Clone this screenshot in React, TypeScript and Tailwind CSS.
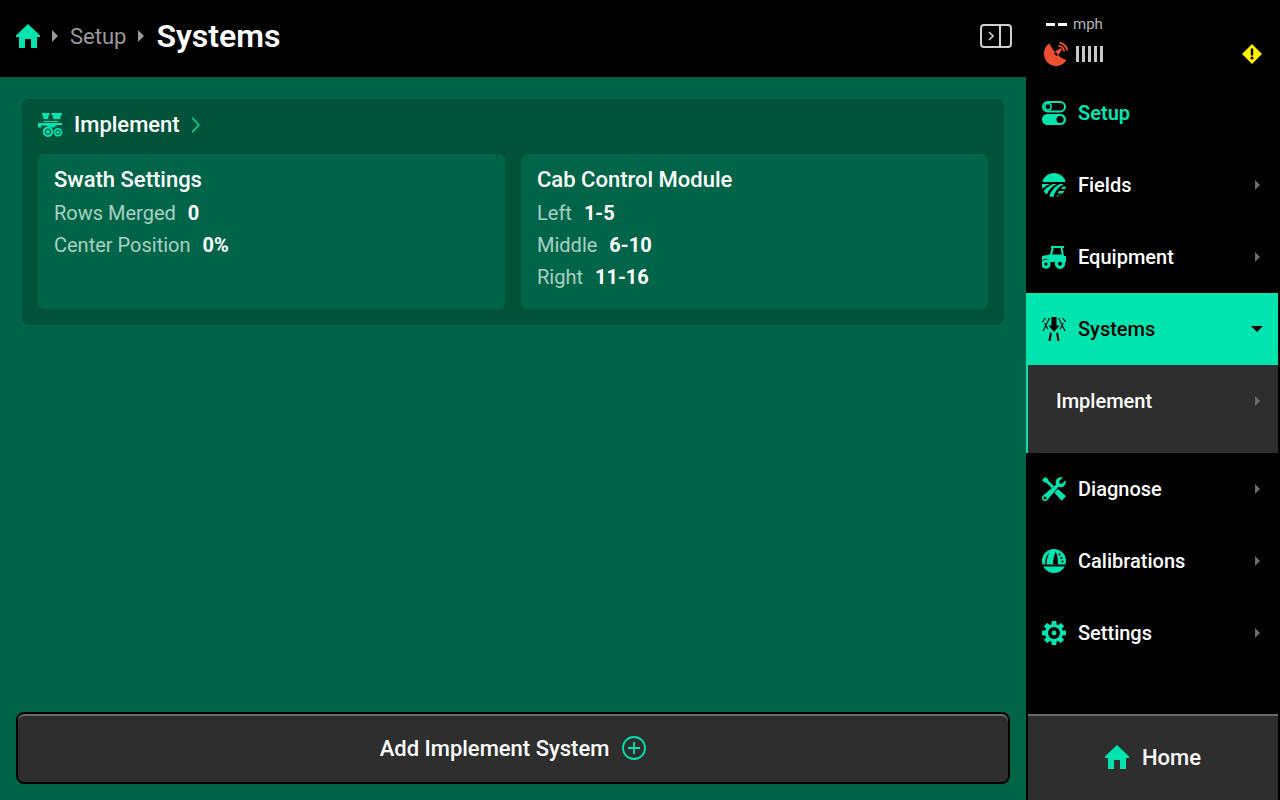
const FONT = "font-['Roboto',sans-serif]";

function HomeIcon({ className }: { className?: string }) {
  return (
    <svg viewBox="0 0 24 24" className={className} fill="currentColor">
      <path d="M12 0 L24 11.5 V13 H21 V24 H15 V15 H9 V24 H3 V13 H0 V11.5 Z" />
    </svg>
  );
}

function Caret({ className }: { className?: string }) {
  return (
    <svg viewBox="0 0 6 10" preserveAspectRatio="none" className={className} fill="currentColor">
      <path d="M0 0 L6 5 L0 10 Z" />
    </svg>
  );
}

function SetupIcon() {
  return (
    <svg viewBox="0 0 24 24" className="w-6 h-6" fill="none" stroke="currentColor">
      <rect x="1" y="1" width="22" height="9.5" rx="4.75" strokeWidth="2" />
      <circle cx="6" cy="5.75" r="3.2" strokeWidth="1.5" />
      <rect x="0" y="13" width="24" height="11" rx="5.5" fill="currentColor" stroke="none" />
      <circle cx="18" cy="18.5" r="3.6" fill="#000" stroke="none" />
    </svg>
  );
}

function FieldsIcon() {
  return (
    <svg viewBox="0 0 24 24" className="w-6 h-6" fill="currentColor">
      <defs>
        <clipPath id="fields-clip">
          <circle cx="12" cy="12" r="12" />
        </clipPath>
      </defs>
      <g clipPath="url(#fields-clip)">
        <rect x="0" y="0" width="24" height="9" />
        <path d="M0 11 H8 C5 12 2 14 0 16.5 Z" />
        <path d="M11 11 H15 C10 13 6.5 17 4.5 22 L1.5 18.5 C3.5 15.5 7 12.5 11 11 Z" />
        <path d="M18 11 H22 C16.5 13.5 13 18 11.5 24 H7 C8.5 18.5 12.5 13.5 18 11 Z" />
        <path d="M24 13.5 V16 H19 L21 13.5 Z M24 18 V20.5 H15.5 L17 18 Z M24 22.5 V24 H14.5 L15 22.5 Z" />
      </g>
    </svg>
  );
}

function EquipmentIcon() {
  return (
    <svg viewBox="0 0 24 24" className="w-6 h-6" fill="currentColor">
      <path d="M9 1 H22 V3 H20.5 L22 11 H24 V17 H22.6 A5.5 5.5 0 0 0 13 17 H7.8 A4.5 4.5 0 0 0 0 15.5 V11 L8 9.5 L9.6 3 H9 Z M11.6 3 L10.2 9.5 H19.8 L18.5 3 Z" fillRule="evenodd" />
      <path d="M4 14.5 a4.6 4.6 0 1 0 .01 0 Z M4 17.5 a1.6 1.6 0 1 1 -.01 0 Z" fillRule="evenodd" />
      <path d="M18 13.5 a5.2 5.2 0 1 0 .01 0 Z M18 16.7 a2 2 0 1 1 -.01 0 Z" fillRule="evenodd" />
    </svg>
  );
}

function SystemsIcon() {
  return (
    <svg viewBox="0 0 24 24" className="w-6 h-6" fill="currentColor">
      <path d="M9.5 0 H14.5 V8.5 H17.5 L12 15 L6.5 8.5 H9.5 Z" />
      <path d="M8 15 L9.8 16.5 L8.6 24 H6.4 Z M16 15 L14.2 16.5 L15.4 24 H17.6 Z" />
      <g fill="none" stroke="currentColor" strokeWidth="1.1">
        <path d="M7.5 1 L1 14 M3.5 1 L0.3 5 M2.5 6 L6 12" />
        <path d="M16.5 1 L23 14 M20.5 1 L23.7 5 M21.5 6 L18 12" />
      </g>
    </svg>
  );
}

function DiagnoseIcon() {
  return (
    <svg viewBox="0 0 24 24" className="w-6 h-6" fill="currentColor">
      <path d="M3 0 L0 3 L2.5 5.5 L4.5 5.8 L10 11.3 L12 9.3 L6.5 3.8 L6 2 Z" />
      <path d="M14.3 13.4 L12.3 15.4 L19.5 23.8 L24 19.3 L16 12 Z" />
      <path fillRule="evenodd" d="M23.5 3.2 L20 6.7 L17.5 6.5 L17.3 4 L20.8 0.5 C17.8 -0.5 14.5 1 13.8 4 C13.5 5.3 13.7 6.5 14.2 7.6 L1 18.5 C-0.4 20 -0.3 22 0.8 23.2 C2 24.3 4 24.4 5.4 23 L16.4 9.8 C17.5 10.3 18.8 10.5 20 10.2 C23 9.5 24.5 6.2 23.5 3.2 Z M3 19.6 a1.5 1.5 0 1 1 -.01 0 Z" />
    </svg>
  );
}

function CalibrationsIcon() {
  return (
    <svg viewBox="0 0 24 24" className="w-6 h-6" fill="currentColor">
      <defs>
        <clipPath id="calib-clip">
          <circle cx="12" cy="12" r="12" />
        </clipPath>
      </defs>
      <g clipPath="url(#calib-clip)">
        <rect x="0" y="0" width="24" height="15.5" />
        <rect x="0" y="17.5" width="24" height="7" />
      </g>
      <path d="M7.5 3.5 C4.5 6 3 10 3 15.5 H4.6 C4.6 11 5.6 7 7.5 3.5 Z" fill="#000" />
      <path d="M13.8 2.5 C12 6 11 11 11 15.5 H16 C16 11 15.5 6 13.8 2.5 Z" fill="#000" />
      <circle cx="17.5" cy="5.5" r="1.1" fill="#000" />
      <circle cx="19.5" cy="9" r="1.1" fill="#000" />
      <circle cx="20.5" cy="12.5" r="1.1" fill="#000" />
    </svg>
  );
}

function SettingsIcon() {
  return (
    <svg viewBox="0 0 24 24" className="w-6 h-6" fill="currentColor">
      {[0, 45, 90, 135, 180, 225, 270, 315].map((a) => (
        <rect key={a} x="9.5" y="0" width="5" height="5" rx="1" transform={`rotate(${a} 12 12)`} />
      ))}
      <circle cx="12" cy="12" r="7.5" fill="none" stroke="currentColor" strokeWidth="3" />
      <circle cx="12" cy="12" r="2.4" />
    </svg>
  );
}

function ImplementIcon() {
  return (
    <svg viewBox="0 0 25 24" className="w-[25px] h-6" fill="currentColor">
      <path d="M4 0 H11.5 V2 H10.8 L10 6 H5.5 L4.7 2 H4 Z M13.5 0 H24 V2 H23 L22 6 H15.5 L14.5 2 H13.5 Z" />
      <path d="M0 10 H24 V12 H19 L16 14.5 H12 L8 12.5 H3 V14.5 H0 Z" />
      <path d="M5.5 8 H20 V9 H5.5 Z" />
      <path fillRule="evenodd" d="M10 13.5 a5.2 5.2 0 1 0 .01 0 Z M10 15.5 a3.2 3.2 0 1 1 -.01 0 Z" />
      <circle cx="10" cy="18.7" r="2" />
      <path fillRule="evenodd" d="M20 15 a4.3 4.3 0 1 0 .01 0 Z M20 16.7 a2.6 2.6 0 1 1 -.01 0 Z" />
      <circle cx="20" cy="19.3" r="1.6" />
    </svg>
  );
}

function DishIcon() {
  return (
    <svg viewBox="0 0 24 24" className="w-6 h-6" fill="#f04e30">
      <path d="M5.5 1.5 C2 3.5 0 7.5 0 12 C0 18.6 5.4 24 12 24 C16.5 24 20.5 21.5 22.5 18 C19 17 16 15 14 13 L12.5 14 L10 11.5 L11 10 C8.8 7.5 6.8 4.8 5.5 1.5 Z" />
      <path d="M11 9.5 L17 6 L18.2 7.2 L14.5 13 Z" />
      <path d="M14.5 3.8 A6 6 0 0 1 20.2 9.5 M15.5 0.8 A8.5 8.5 0 0 1 23.2 8.5" fill="none" stroke="#f04e30" strokeWidth="1.8" />
    </svg>
  );
}

function NavRow({ label, icon, active }: { label: string; icon: React.ReactNode; active?: boolean }) {
  return (
    <div className={`flex h-[72px] w-[252px] items-center pl-4 pr-4 ${active ? "bg-[#00e5b0] text-black" : "text-[#00e5b0]"}`}>
      <div className="flex w-6 justify-center">{icon}</div>
      <span className={`ml-3 text-[20px] font-medium ${active ? "text-black" : "text-white"}`}>{label}</span>
      {active ? (
        <div className="ml-auto -mr-px h-0 w-0 border-x-[6px] border-t-[6px] border-x-transparent border-t-black" />
      ) : (
        <Caret className="ml-auto mr-[2px] h-[10px] w-[5px] text-[#6e6e6e]" />
      )}
    </div>
  );
}

function Stat({ label, value }: { label: string; value: string }) {
  return (
    <div className="mt-[6px] flex h-[26px] items-center text-[20px]">
      <span className="text-[#a8d0c2]">{label}</span>
      <span className="ml-3 font-bold text-white">{value}</span>
    </div>
  );
}

export default function App() {
  return (
    <div className={`flex h-[800px] w-[1280px] overflow-hidden bg-black ${FONT}`}>
      <div className="flex w-[1026px] flex-col">
        {/* top bar */}
        <header className="flex h-[77px] items-center bg-black pb-[5px] pl-4 pr-[14px]">
          <HomeIcon className="h-6 w-6 text-[#00e5b0]" />
          <Caret className="ml-3 h-3 w-[6px] text-[#9a9a9a]" />
          <span className="ml-3 text-[22px] text-[#9a9a9a]">Setup</span>
          <Caret className="ml-3 h-3 w-[6px] text-[#9a9a9a]" />
          <span className="ml-3 text-[32px] font-semibold leading-none text-white">Systems</span>
          <div className="ml-auto flex h-6 w-8 rounded-[4px] border-2 border-[#cfcfcf]">
            <div className="flex w-[19px] items-center justify-center border-r-2 border-[#cfcfcf]">
              <svg viewBox="0 0 6 10" className="h-[10px] w-[6px]" fill="none" stroke="#cfcfcf" strokeWidth="1.6">
                <path d="M1 1 L5 5 L1 9" />
              </svg>
            </div>
          </div>
        </header>

        {/* content */}
        <main className="flex flex-1 flex-col bg-[#006548] px-4 pb-4 pt-[22px]">
          <section className="mx-[6px] h-[226px] rounded-[8px] bg-[#005239] px-4">
            <div className="mb-1 flex h-[51px] items-center text-[#00e5b0]">
              <ImplementIcon />
              <span className="ml-[11px] text-[22px] font-medium text-white">Implement</span>
              <svg viewBox="0 0 8 14" className="ml-[11px] h-[16px] w-[9px]" fill="none" stroke="currentColor" strokeWidth="1.2">
                <path d="M1 0.5 L7 7 L1 13.5" />
              </svg>
            </div>
            <div className="grid grid-cols-2 gap-4">
              <div className="h-[155px] rounded-[6px] bg-[#006548] px-4 pt-[13px]">
                <h3 className="pb-px text-[22px] font-medium leading-[26px] text-white">Swath Settings</h3>
                <Stat label="Rows Merged" value="0" />
                <Stat label="Center Position" value="0%" />
              </div>
              <div className="h-[155px] rounded-[6px] bg-[#006548] px-4 pt-[13px]">
                <h3 className="pb-px text-[22px] font-medium leading-[26px] text-white">Cab Control Module</h3>
                <Stat label="Left" value="1-5" />
                <Stat label="Middle" value="6-10" />
                <Stat label="Right" value="11-16" />
              </div>
            </div>
          </section>

          <button className="mt-auto flex h-[72px] w-full items-center justify-center rounded-[8px] border-2 border-black bg-[#2e2e2e] text-[22px] font-medium text-white shadow-[inset_0_2px_0_#6a6a6a]">
            <span>Add Implement System</span>
            <svg viewBox="0 0 24 24" className="ml-[13px] h-6 w-6" fill="none" stroke="#00e5b0" strokeWidth="1.8">
              <circle cx="12" cy="12" r="11" />
              <path d="M12 6 V18 M6 12 H18" />
            </svg>
          </button>
        </main>
      </div>

      {/* sidebar */}
      <aside className="flex w-[254px] flex-col bg-black">
        <div className="relative h-[77px] pl-5">
          <div className="flex h-[48px] items-center pt-[1px]">
            <div className="h-[3px] w-[9px] bg-white" />
            <div className="ml-[3px] h-[3px] w-[9px] bg-white" />
            <span className="ml-[6px] text-[15px] text-[#b5b5b5]">mph</span>
          </div>
          <div className="-mt-[6px] flex items-center">
            <div className="-ml-[2px]">
              <DishIcon />
            </div>
            <div className="ml-2 flex gap-[3px]">
              {[0, 1, 2, 3, 4].map((i) => (
                <div key={i} className="h-4 w-[3px] bg-[#c8c8c8]" />
              ))}
            </div>
          </div>
          <div className="absolute left-[216px] top-[44px]">
            <svg viewBox="0 0 20 20" className="h-5 w-5">
              <path d="M10 0 L20 10 L10 20 L0 10 Z" fill="#fff200" />
              <path d="M8.8 4.5 H11.2 V11.5 H8.8 Z" fill="#000" />
              <circle cx="10" cy="14" r="1.5" fill="#000" />
            </svg>
          </div>
        </div>

        <div className="flex h-[72px] w-[252px] items-center pl-4 text-[#00e5b0]">
          <SetupIcon />
          <span className="ml-3 text-[20px] font-semibold">Setup</span>
        </div>
        <NavRow label="Fields" icon={<FieldsIcon />} />
        <NavRow label="Equipment" icon={<EquipmentIcon />} />
        <NavRow label="Systems" icon={<SystemsIcon />} active />
        <div className="flex h-[88px] w-[252px] items-start border-l-2 border-[#00e5b0] bg-[#2e2e2e] pl-7 pr-4 pt-[22px]">
          <span className="text-[20px] font-medium leading-7 text-white">Implement</span>
          <Caret className="ml-auto mr-[2px] mt-[9px] h-[10px] w-[5px] text-[#6e6e6e]" />
        </div>
        <NavRow label="Diagnose" icon={<DiagnoseIcon />} />
        <NavRow label="Calibrations" icon={<CalibrationsIcon />} />
        <NavRow label="Settings" icon={<SettingsIcon />} />

        <div className="ml-[2px] mt-auto flex h-[86px] w-[250px] items-center justify-center border-t-2 border-[#6a6a6a] bg-[#2e2e2e] pb-[2px] text-[22px] font-medium text-white">
          <HomeIcon className="h-6 w-6 text-[#00e5b0]" />
          <span className="ml-[13px]">Home</span>
        </div>
      </aside>
    </div>
  );
}
